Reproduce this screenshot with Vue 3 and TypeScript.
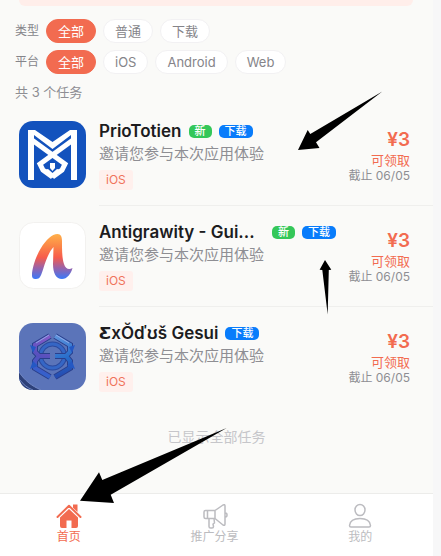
<script setup lang="ts">
import { ref } from 'vue'

interface Task {
  initial: string
  name: string
  isNew: boolean
  icon: 'monogram' | 'ribbon' | 'hexagon'
  clipped: boolean
}

const types: string[] = ['全部', '普通', '下载']
const platforms: string[] = ['全部', 'iOS', 'Android', 'Web']
const activeType = ref('全部')
const activePlatform = ref('全部')

// "initial" holds a leading letter that needs a face with a wider Latin range.
const tasks: Task[] = [
  { initial: '', name: 'PrioTotien', isNew: true, icon: 'monogram', clipped: false },
  { initial: '', name: 'Antigrawity - Gui...', isNew: true, icon: 'ribbon', clipped: true },
  { initial: 'Ƹ', name: 'xŎďʊš Gesui', isNew: false, icon: 'hexagon', clipped: false },
]
</script>

<template>
  <div class="page">
    <div class="app">
      <div class="banner"></div>

      <section class="filters">
        <div class="filter">
          <span class="filter-label">类型</span>
          <button
            v-for="t in types"
            :key="t"
            type="button"
            class="pill"
            :class="{ active: t === activeType }"
            @click="activeType = t"
          >{{ t }}</button>
        </div>
        <div class="filter">
          <span class="filter-label">平台</span>
          <button
            v-for="p in platforms"
            :key="p"
            type="button"
            class="pill"
            :class="{ active: p === activePlatform }"
            @click="activePlatform = p"
          >{{ p }}</button>
        </div>
      </section>

      <p class="count">共 3 个任务</p>

      <main class="tasks">
        <article v-for="task in tasks" :key="task.name" class="task">
          <svg v-if="task.icon === 'monogram'" class="task-icon" viewBox="0 0 67 67" aria-hidden="true">
            <rect width="67" height="67" rx="14" fill="#1352bd" />
            <path d="M9 59V9h7l17.500 12L51 9h7v50h-6V14L33.500 28 15 14v45z" fill="#fff" />
            <g fill="none" stroke="#fff" stroke-width="5" stroke-linejoin="miter">
              <path d="M13 19L46 43 43 49 33.500 56" />
              <path d="M54 19L21 43 24 49 33.500 56" />
            </g>
            <path d="M25 49l4-1 4.500 4 4.500-4 4 1-8.500 8z" fill="#fff" />
            <path d="M31 42h5v5l-2.500 3L31 47z" fill="#fff" />
          </svg>
          <svg v-else-if="task.icon === 'ribbon'" class="task-icon" viewBox="0 0 67 67" aria-hidden="true">
            <defs>
              <linearGradient id="ribbon" x1="0" y1="0" x2="0" y2="1">
                <stop offset="0" stop-color="#ffb04a" />
                <stop offset=".28" stop-color="#fb8447" />
                <stop offset=".52" stop-color="#f75c4b" />
                <stop offset=".75" stop-color="#9a62a8" />
                <stop offset="1" stop-color="#3979fa" />
              </linearGradient>
            </defs>
            <rect x=".5" y=".5" width="66" height="66" rx="14" fill="#fff" stroke="#f2f1ef" />
            <path d="M13 53C13 46 17 34 22 26 27 18 33 12 38.500 12 42 12 43 15 43 19 43 28 43 36 45 42 46.500 47 50 48 53.500 46 52 52 48 57 43 57 37 57 34 51 34 42L34.500 25C30 30 27 38 24.500 46 22 54 21 57 17 57 14 57 13 56 13 53z" fill="url(#ribbon)" />
          </svg>
          <svg v-else class="task-icon" viewBox="0 0 67 67" aria-hidden="true">
            <defs>
              <clipPath id="tile"><rect width="67" height="67" rx="14" /></clipPath>
              <linearGradient id="gem-left" gradientUnits="userSpaceOnUse" x1="28" y1="10" x2="14" y2="56">
                <stop offset="0" stop-color="#8a5cc9" />
                <stop offset=".5" stop-color="#5750bd" />
                <stop offset="1" stop-color="#2668d2" />
              </linearGradient>
              <linearGradient id="gem-right" gradientUnits="userSpaceOnUse" x1="38" y1="10" x2="52" y2="56">
                <stop offset="0" stop-color="#6398df" />
                <stop offset=".55" stop-color="#286dca" />
                <stop offset="1" stop-color="#2440a8" />
              </linearGradient>
            </defs>
            <g clip-path="url(#tile)">
              <rect width="67" height="67" fill="#5b74b9" />
              <path d="M0 49c6 9 13 14 22 18H0z" fill="#2d4079" />
              <path d="M0 49c6 9 13 14 22 18M0 56c4 5 8 9 14 11" fill="none" stroke="#7389c4" />
              <circle cx="33.500" cy="33" r="12" fill="none" stroke="#2c4a9d" stroke-width="5" />
              <circle cx="33.500" cy="33" r="12" fill="none" stroke="#3566c5" stroke-width="3" />
              <g fill="none" stroke="#2a3f8c" stroke-width="6">
                <path d="M31 13L16 22v7l4 4-4 5v7l15 9M18 33h13" />
                <path d="M36 13l15 9v7l-4 4 4 5v7l-15 9M49 33H36" />
              </g>
              <path d="M31 13L16 22v7l4 4-4 5v7l15 9M18 33h13" fill="none" stroke="url(#gem-left)" stroke-width="4" />
              <path d="M36 13l15 9v7l-4 4 4 5v7l-15 9M49 33.100L36 33" fill="none" stroke="url(#gem-right)" stroke-width="4" />
              <path d="M11 22l6 2-3 6zM11 46l3-8 5 5zM56 22l-6 2 3 6zM56 46l-3-8-5 5z" fill="#2458c4" />
              <path d="M17 20l13-8M37 12l13 8" stroke="#8fa8e6" stroke-width="1" />
            </g>
          </svg>

          <div class="task-body">
            <div class="task-info">
              <div class="heading">
                <h2 class="name" :class="{ clipped: task.clipped }"><span v-if="task.initial" class="initial">{{ task.initial }}</span>{{ task.name }}</h2>
                <span v-if="task.isNew" class="badge fresh">新</span>
                <span class="badge download">下载</span>
              </div>
              <p class="description">邀请您参与本次应用体验</p>
              <span class="system">iOS</span>
            </div>
            <div class="reward">
              <strong class="price">¥3</strong>
              <span class="status">可领取</span>
              <span class="deadline">截止 06/05</span>
            </div>
          </div>
        </article>
      </main>

      <p class="end">已显示全部任务</p>

      <nav class="tabs">
        <a href="#home" class="tab current">
          <svg class="tab-icon" viewBox="0 0 26 26" aria-hidden="true">
            <path d="M1.500 14L13 2.800 24.500 14" fill="none" stroke="currentColor" stroke-width="2" stroke-linecap="round" stroke-linejoin="round" />
            <path d="M17 1.500h4.500v7.500L17 4.700zM13 6l9 8.600V23q0 2-2 2h-4.500v-7.500h-5V25H6q-2 0-2-2v-8.400z" fill="currentColor" />
          </svg>
          <span>首页</span>
        </a>
        <a href="#share" class="tab">
          <svg class="tab-icon" viewBox="0 0 26 26" aria-hidden="true" fill="none" stroke="currentColor" stroke-width="1.500" stroke-linejoin="round" stroke-linecap="round">
            <path d="M3.500 7.500H13L21 2q2-1 2 1v18q0 2-2 1l-8-6.500H3.500Q2 15.500 2 14V9q0-1.500 1.500-1.500zM5.500 7.500v8M13 7.500v8M23.500 10q1.500 0 1.500 2t-1.500 2M7 15.500v8Q7 25 8.500 25H10q1.500 0 1.500-1.500L11 21l1.500-1-.5-4.500" />
          </svg>
          <span>推广分享</span>
        </a>
        <a href="#me" class="tab">
          <svg class="tab-icon" viewBox="0 0 26 26" aria-hidden="true" fill="none" stroke="currentColor" stroke-width="1.500" stroke-linejoin="round">
            <ellipse cx="13" cy="7" rx="5" ry="5.500" />
            <path d="M2.500 22.500C3 18 7 15.500 13 15.500S23 18 23.500 22.500q0 1.500-1.500 1.500H4q-1.500 0-1.500-1.500z" />
          </svg>
          <span>我的</span>
        </a>
      </nav>
    </div>

    <svg class="arrows" width="441" height="556" viewBox="0 0 441 556" aria-hidden="true">
      <path d="M298 150L307.700 130 310.300 134 382.300 91.500 316 142.300 319.500 148z" />
      <path d="M325 260L331.300 269.700 328.800 270 327.700 314.500 322.300 270 319.600 269.700z" />
      <path d="M80 500.700L99 472.300 102.300 480 226.700 428 110.700 494.700 114 503z" />
    </svg>
  </div>
</template>

<style>
body {
  margin: 0;
  background: #f7f7f8;
}
</style>

<style scoped>
.page {
  position: relative;
  min-height: 100vh;
  padding-right: 8px;
  box-sizing: border-box;
  overflow: hidden;
  display: flex;
  font-family: Inter, 'Noto Sans CJK SC', sans-serif;
  color: #8e8e93;
}

.app {
  flex: 1;
  min-width: 0;
  display: flex;
  flex-direction: column;
  background: #fafaf8;
}

.banner {
  height: 6px;
  margin: 0 20px 0 19px;
  border-radius: 0 0 8px 8px;
  background: #ffeeea;
}

.filters {
  display: flex;
  flex-direction: column;
  gap: 7px;
  padding: 13px 15px 0;
}

.filter {
  display: flex;
  align-items: center;
  gap: 7px;
}

.filter-label {
  font-size: 12px;
  line-height: 24px;
  color: #85858a;
}

.pill {
  height: 24px;
  padding: 0 11px;
  border: 1px solid #f2f1f3;
  border-radius: 12px;
  background: #fff;
  color: #858489;
  font-family: inherit;
  font-size: 13px;
  line-height: 20px;
}

.pill.active {
  border-color: #f26b50;
  background: #f26b50;
  color: #fff;
}

.count {
  margin: 8px 15px 2px;
  font-size: 13px;
  line-height: 21px;
}

.task {
  display: flex;
  gap: 13px;
  padding-left: 19px;
}

.task-icon {
  flex: none;
  width: 67px;
  height: 67px;
  margin-top: 16px;
}

.task-body {
  flex: 1;
  min-width: 0;
  display: flex;
  justify-content: space-between;
  padding: 16px 23px 15px 0;
  border-bottom: 1px solid #efefed;
}

.task:last-child .task-body {
  border-color: transparent;
}

.heading {
  display: flex;
  align-items: center;
  gap: 7px;
  height: 20px;
}

.name {
  margin: 0;
  font-size: 17px;
  font-weight: 600;
  line-height: 20px;
  white-space: nowrap;
  color: #1c1c1e;
}

.name.clipped {
  min-width: 166px;
}

.initial {
  font-family: 'DejaVu Sans', sans-serif;
  font-size: 16px;
  line-height: 16px;
}

.badge {
  padding: 0 6px;
  border-radius: 5px;
  font-size: 11px;
  font-weight: 500;
  line-height: 13px;
  white-space: nowrap;
  color: #fff;
}

.fresh {
  background: #34c759;
}

.download {
  background: #087cfb;
}

.description {
  margin: 2px 0 5px;
  font-size: 15px;
  line-height: 22px;
  white-space: nowrap;
}

.system {
  display: block;
  width: fit-content;
  padding: 0 7px;
  border-radius: 3px;
  background: #fff0ed;
  color: #f0735a;
  font-size: 12px;
  line-height: 20px;
}

.reward {
  display: flex;
  flex-direction: column;
  align-items: flex-end;
  padding-top: 7px;
  white-space: nowrap;
}

.price {
  font-size: 19px;
  font-weight: 600;
  line-height: 24px;
  color: #f26b50;
}

.status {
  font-size: 13px;
  line-height: 16px;
  color: #f26b50;
}

.deadline {
  font-size: 12px;
  line-height: 15px;
}

.end {
  margin: 18px 0 0;
  font-size: 14px;
  line-height: 22px;
  text-align: center;
  color: #c6c6ca;
}

.tabs {
  display: flex;
  flex: none;
  height: 63px;
  margin: auto 0 0 -4px;
  padding-top: 9px;
  box-sizing: border-box;
  border-top: 1px solid #ececea;
  background: #fff;
}

.tab {
  flex: 1;
  display: flex;
  flex-direction: column;
  align-items: center;
  font-size: 12px;
  line-height: 16px;
  text-decoration: none;
  color: #bcbcc0;
}

.tab.current {
  color: #f26b50;
}

.tab-icon {
  width: 26px;
  height: 26px;
}

.arrows {
  position: absolute;
  top: 0;
  left: 0;
  pointer-events: none;
}
</style>
